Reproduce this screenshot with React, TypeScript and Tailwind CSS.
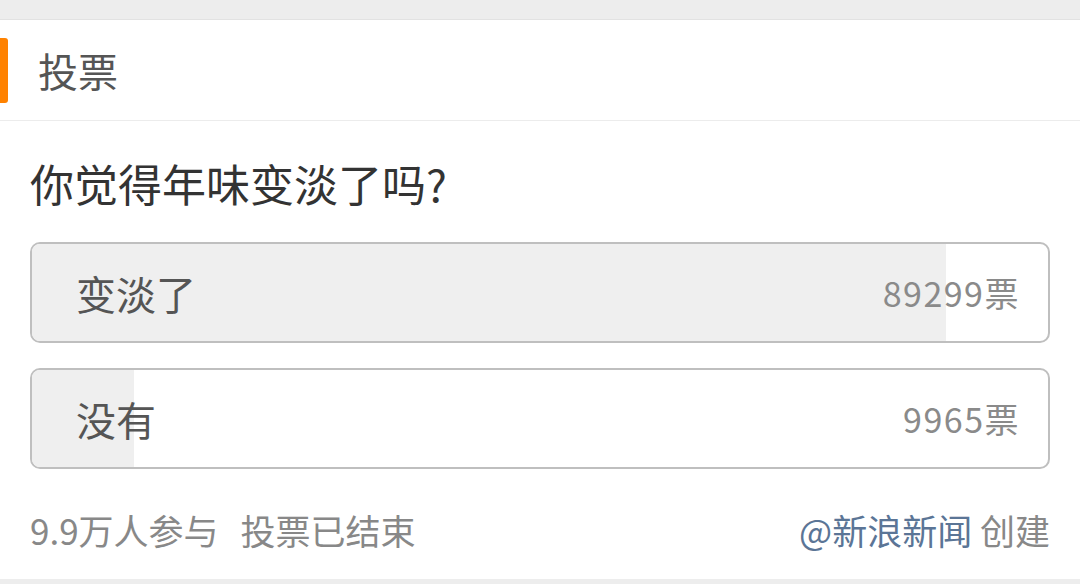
const FONT = "font-['Noto_Sans_CJK_SC','Noto_Sans',sans-serif]";

const OPTIONS = [
  { label: "变淡了", votes: 89299 },
  { label: "没有", votes: 9965 },
];

export default function App() {
  const total = OPTIONS.reduce((s, o) => s + o.votes, 0);

  return (
    <div className={`relative w-[1080px] h-[584px] bg-white overflow-hidden ${FONT}`}>
      <div className="h-[20px] bg-[#ededed] border-b border-[#e2e2e2]" />

      <div className="h-[101px] flex items-center border-b border-[#ececec]">
        <div className="w-[8px] h-[65px] bg-[#ff8200] rounded-r-[3px]" />
        <span className="ml-[30px] text-[40px] leading-none text-[#555]">投票</span>
      </div>

      <div className="px-[30px]">
        <h2 className="mt-[38px] text-[44px] leading-[48px] text-[#333]">你觉得年味变淡了吗?</h2>

        <div className="mt-[35px] flex flex-col gap-[25px]">
          {OPTIONS.map((o) => (
            <div
              key={o.label}
              className="relative h-[101px] rounded-[10px] border-2 border-[#bfbfbf] overflow-hidden"
            >
              <div
                className="absolute inset-y-0 left-0 bg-[#efefef]"
                style={{ width: `${(o.votes / total) * 100}%` }}
              />
              <div className="relative h-full flex items-center justify-between pl-[44px] pr-[28px]">
                <span className="text-[40px] leading-none text-[#555]">{o.label}</span>
                <span className="text-[34px] leading-none tracking-[1.5px] text-[#8a8a8a]">{o.votes}票</span>
              </div>
            </div>
          ))}
        </div>

        <div className="mt-[43px] flex items-center justify-between text-[35px] leading-[35px] text-[#888]">
          <span>
            9.9万人参与<span className="ml-[22px]">投票已结束</span>
          </span>
          <span>
            <span className="text-[#5b7596]">@新浪新闻</span> 创建
          </span>
        </div>
      </div>

      <div className="absolute left-0 top-[579px] w-[1080px] h-[5px] bg-[#ededed]" />
    </div>
  );
}
